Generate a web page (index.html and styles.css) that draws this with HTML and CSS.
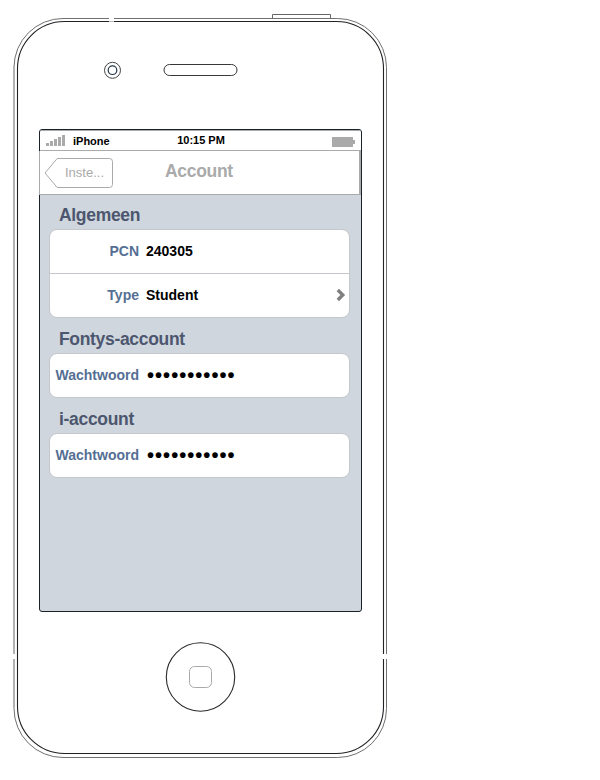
FILE: index.html
```html
<!DOCTYPE html>
<html lang="nl">
<head>
<meta charset="utf-8">
<title>Account</title>
<link rel="stylesheet" href="styles.css">
</head>
<body>
<div class="phone">
  <svg class="frame" width="400" height="780" viewBox="0 0 400 780" fill="none">
    <path d="M272.5 18V14.5H330.5V18" stroke="#666"/>
    <rect x="14" y="18.5" width="372.5" height="739" rx="49" stroke="#707070"/>
    <path d="M14 66V707" stroke="#b2b2b2" stroke-width="2"/>
    <rect x="17.5" y="21.5" width="366" height="732" rx="47" stroke="#202226" stroke-width="1.1"/>
    <path d="M109 17h5v3h-5zM12 654h4v5h-4zM382 654h6v5h-6z" fill="#fff"/>
    <path d="M109 21.5h5" stroke="#bbb"/>
    <circle cx="112.5" cy="70.3" r="8" stroke="#444"/>
    <circle cx="112.5" cy="70.2" r="4.3" stroke="#24384a" stroke-width="1.2"/>
    <rect x="164" y="64.5" width="73" height="11" rx="5.5" stroke="#383838"/>
    <circle cx="200.5" cy="677" r="34.2" stroke="#2b2b2b" stroke-width="1.1"/>
    <rect x="189.5" y="666.5" width="22" height="21" rx="5" stroke="#aaa"/>
  </svg>
  <main class="screen">
    <header class="status">
      <div class="carrier">
        <svg width="20" height="12" viewBox="0 0 20 12" fill="#aaa"><path d="M0 7h3v3H0zM4 5h3v5H4zM8 3h3v7H8zM12 1h3v9h-3zM16 -1h3v11h-3z"/></svg>
        <span>iPhone</span>
      </div>
      <span class="clock">10:15 PM</span>
      <svg class="battery" width="23" height="10" viewBox="0 0 23 10" fill="#aaa"><path d="M0 0h21v3h2v4h-2v3H0z"/></svg>
    </header>
    <nav class="nav">
      <div class="back">
        <svg class="back-shape" width="70" height="32" viewBox="0 0 70 32" fill="none"><path d="M1 16L13.2 1.5H65.500Q68.500 1.500 68.500 4.500V27.500Q68.500 30.500 65.500 30.500H13.200Z" stroke="#aaa"/></svg>
        <span>Inste...</span>
      </div>
      <h1>Account</h1>
    </nav>
    <section class="content">
      <h2>Algemeen</h2>
      <div class="card">
        <div class="row"><span class="label">PCN</span><span class="value">240305</span></div>
        <div class="row"><span class="label">Type</span><span class="value">Student</span>
          <svg class="chevron" width="10" height="14" viewBox="0 0 10 14" fill="none"><path d="M1.800 2L6.800 7L1.800 12" stroke="#808080" stroke-width="3.300"/></svg>
        </div>
      </div>
      <h2>Fontys-account</h2>
      <div class="card">
        <div class="row"><span class="label">Wachtwoord</span><span class="value secret">•••••••••••</span></div>
      </div>
      <h2>i-account</h2>
      <div class="card">
        <div class="row"><span class="label">Wachtwoord</span><span class="value secret">•••••••••••</span></div>
      </div>
    </section>
  </main>
</div>
</body>
</html>
```

FILE: styles.css
```css
* { box-sizing: border-box; }
body {
  margin: 0;
  background: #fff;
  font-family: "Liberation Sans", Arial, sans-serif;
  font-weight: bold;
}
h1, h2 { margin: 0; font-size: 17.5px; letter-spacing: -0.32px; }
.phone {
  position: relative;
  width: 400px;
  height: 780px;
  padding: 129px 0 0 39px;
}
.frame { position: absolute; left: 0; top: 0; }
.screen {
  position: relative;
  display: flex;
  flex-direction: column;
  width: 323px;
  height: 483px;
  border: 1px solid #1b2128;
  border-radius: 3px;
  background: #cfd6dd;
}
.status {
  display: grid;
  grid-template-columns: 1fr auto 1fr;
  align-items: center;
  height: 21px;
  padding: 1px 6px 0;
  border-top: 1px solid #aaa;
  border-bottom: 1px solid #aaa;
  border-radius: 2px 2px 0 0;
  background: #fff;
  font-size: 11px;
  line-height: 19px;
  color: #000;
}
.carrier { display: flex; align-items: center; gap: 7px; line-height: 19px; }
.carrier svg { overflow: visible; }
.clock { padding: 0 0 2px 1px; line-height: 17px; }
.battery { justify-self: end; }
.nav {
  display: flex;
  height: 44px;
  margin-left: -1px;
  border: solid #aaa;
  border-width: 0 2px 1px 1px;
  background: #fff;
  color: #aaa;
}
.back {
  position: relative;
  width: 70px;
  height: 32px;
  margin: 6px 0 0 4px;
  padding-left: 21px;
  font-size: 13px;
  font-weight: normal;
  line-height: 32px;
}
.back-shape { position: absolute; left: 0; top: 0; }
.nav h1 { margin-left: 51px; line-height: 41px; }
.content { padding: 9px 11px 0 9px; }
.content h2 {
  height: 25px;
  padding-left: 10px;
  line-height: 22px;
  color: #4d566f;
}
.card {
  width: 301px;
  margin-bottom: 10px;
  border: 1px solid #c5c8cb;
  border-radius: 8px;
  background: #fff;
}
.row { display: flex; align-items: center; height: 43px; padding-bottom: 2px; font-size: 14px; }
.row + .row { height: 44px; border-top: 1px solid #c4c6cb; }
.label { width: 89px; text-align: right; color: #556f94; }
.value { margin-left: 7px; color: #000; }
.secret { margin-left: 8px; font-size: 20px; letter-spacing: 1.05px; line-height: 18px; }
.chevron { margin: 1px 3px 0 auto; }
```
